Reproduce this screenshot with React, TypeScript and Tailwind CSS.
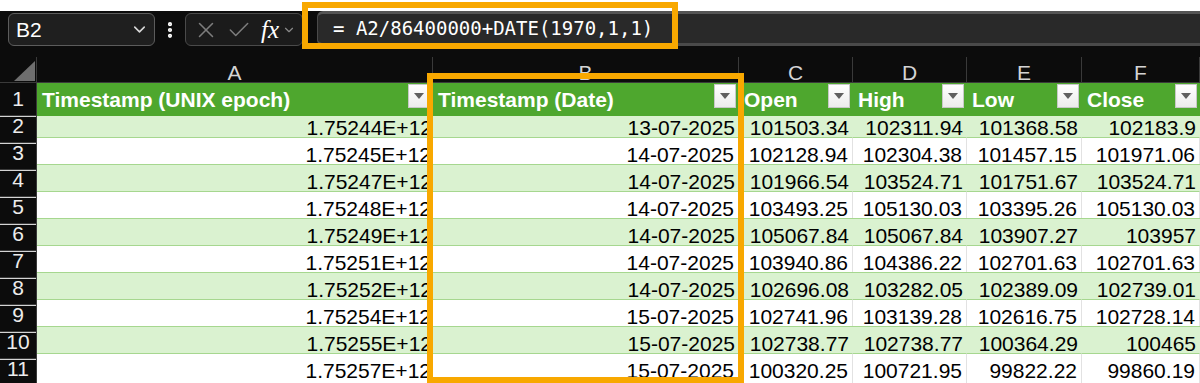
import { ChevronDown, X, Check, EllipsisVertical } from "lucide-react";

const rows: string[][] = [
  ["1.75244E+12", "13-07-2025", "101503.34", "102311.94", "101368.58", "102183.9"],
  ["1.75245E+12", "14-07-2025", "102128.94", "102304.38", "101457.15", "101971.06"],
  ["1.75247E+12", "14-07-2025", "101966.54", "103524.71", "101751.67", "103524.71"],
  ["1.75248E+12", "14-07-2025", "103493.25", "105130.03", "103395.26", "105130.03"],
  ["1.75249E+12", "14-07-2025", "105067.84", "105067.84", "103907.27", "103957"],
  ["1.75251E+12", "14-07-2025", "103940.86", "104386.22", "102701.63", "102701.63"],
  ["1.75252E+12", "14-07-2025", "102696.08", "103282.05", "102389.09", "102739.01"],
  ["1.75254E+12", "15-07-2025", "102741.96", "103139.28", "102616.75", "102728.14"],
  ["1.75255E+12", "15-07-2025", "102738.77", "102738.77", "100364.29", "100465"],
  ["1.75257E+12", "15-07-2025", "100320.25", "100721.95", "99822.22", "99860.19"],
];

const headers = ["Timestamp (UNIX epoch)", "Timestamp (Date)", "Open", "High", "Low", "Close"];
const letters = ["A", "B", "C", "D", "E", "F"];

const gridCols = "grid grid-cols-[37px_396px_306px_114px_114px_115px_118px]";

function FilterButton() {
  return (
    <div className="absolute right-[3px] top-[1px] flex h-[24px] w-[22px] items-center justify-center border border-[#c8c8c8] bg-gradient-to-b from-white to-[#ececec]">
      <svg width="10" height="6" viewBox="0 0 10 6">
        <path d="M0 0 L10 0 L5 6 Z" fill="#5f5f5f" />
      </svg>
    </div>
  );
}

export default function App() {
  return (
    <div
      className="relative h-[383px] w-[1200px] overflow-hidden bg-[#0c0c0c]"
      style={{ fontFamily: '"Liberation Sans", Arial, sans-serif' }}
    >
      <div className="h-[11px] bg-white" />

      {/* Formula bar */}
      <div className="flex h-[35px] items-start pl-[8px]">
        <div className="mt-[2px] flex h-[33px] w-[147px] items-center justify-between rounded-[6px] border border-[#5c5c5c] bg-[#1f1f1f] pl-[7px] pr-[5px]">
          <span className="text-[21px] text-white">B2</span>
          <ChevronDown className="h-[19px] w-[19px] text-[#d8d8d8]" strokeWidth={2} />
        </div>
        <div className="mt-[2px] flex h-[33px] w-[30px] items-center justify-center">
          <EllipsisVertical className="h-[20px] w-[20px] text-white" strokeWidth={3} />
        </div>
        <div className="mt-[2px] flex h-[33px] w-[118px] items-center rounded-[6px] border border-[#4a4a4a] bg-[#1b1b1b] pl-[7px]">
          <X className="h-[26px] w-[26px] text-[#7d7d7d]" strokeWidth={1.4} />
          <Check className="ml-[7px] h-[26px] w-[26px] text-[#7d7d7d]" strokeWidth={1.4} />
          <span
            className="ml-[9px] text-[25px] italic leading-none text-white"
            style={{ fontFamily: '"Liberation Serif", "Times New Roman", serif' }}
          >
            fx
          </span>
          <ChevronDown className="ml-[3px] h-[14px] w-[14px] text-[#8a8a8a]" strokeWidth={2} />
        </div>
        <div className="ml-[14px] flex h-[35px] flex-1 items-center rounded-l-[6px] border-y-[3px] border-l border-t-[#555] border-b-[#4a4a4a] border-l-[#4a4a4a] bg-[#292929] pl-[15px]">
          <span
            className="text-[19px] text-white"
            style={{ fontFamily: '"DejaVu Sans Mono", "Liberation Mono", monospace' }}
          >
            = A2/86400000+DATE(1970,1,1)
          </span>
        </div>
      </div>

      <div className="h-[11px]" />

      {/* Column headers */}
      <div className={`${gridCols} h-[26px] border-b border-[#3a3a3a]`}>
        <div className="relative border-r border-[#3a3a3a]">
          <svg className="absolute left-[14px] top-[4px]" width="21" height="20" viewBox="0 0 21 20">
            <path d="M0 20 L21 20 L21 0 Z" fill="#6e6e6e" />
          </svg>
        </div>
        {letters.map((l) => (
          <div key={l} className="flex items-center justify-center border-r border-[#3a3a3a] text-[21px] text-[#d4d4d4]">
            {l}
          </div>
        ))}
        <div />
      </div>

      {/* Header row */}
      <div className={`${gridCols} h-[27px]`}>
        <div className="flex items-center justify-center border-b border-r border-[#3a3a3a] text-[21px] text-[#ececec]">1</div>
        {headers.map((h) => (
          <div key={h} className="relative flex items-center bg-[#4ea72e] pl-[5px] text-[21px] font-bold text-white">
            {h}
            <FilterButton />
          </div>
        ))}
        <div className="border-b border-[#d4d4d4] bg-white" />
      </div>

      {/* Data rows */}
      {rows.map((r, i) => (
        <div key={i} className={`${gridCols} h-[27px]`}>
          <div className="flex items-center justify-center border-b border-r border-[#3a3a3a] text-[21px] text-[#ececec]">
            {i + 2}
          </div>
          {r.map((v, j) => (
            <div
              key={j}
              className={`flex items-center justify-end overflow-hidden whitespace-nowrap border-t border-[#a6d78f] pt-[2px] text-[21px] text-black ${
                j === 0 ? "pr-[1px]" : "pr-[4px]"
              } ${i % 2 === 0 ? "bg-[#daf2d0]" : "border-r border-r-[#e2e2e2] bg-white"}`}
            >
              {v}
            </div>
          ))}
          <div className="border-b border-l border-[#d4d4d4] bg-white" />
        </div>
      ))}

      {/* Highlight boxes */}
      <div className="absolute left-[302px] top-[2px] h-[47px] w-[376px] border-[6px] border-[#f8a800]" />
      <div className="absolute left-[427px] top-[73px] h-[310px] w-[317px] border-[6px] border-[#f8a800]" />
    </div>
  );
}
